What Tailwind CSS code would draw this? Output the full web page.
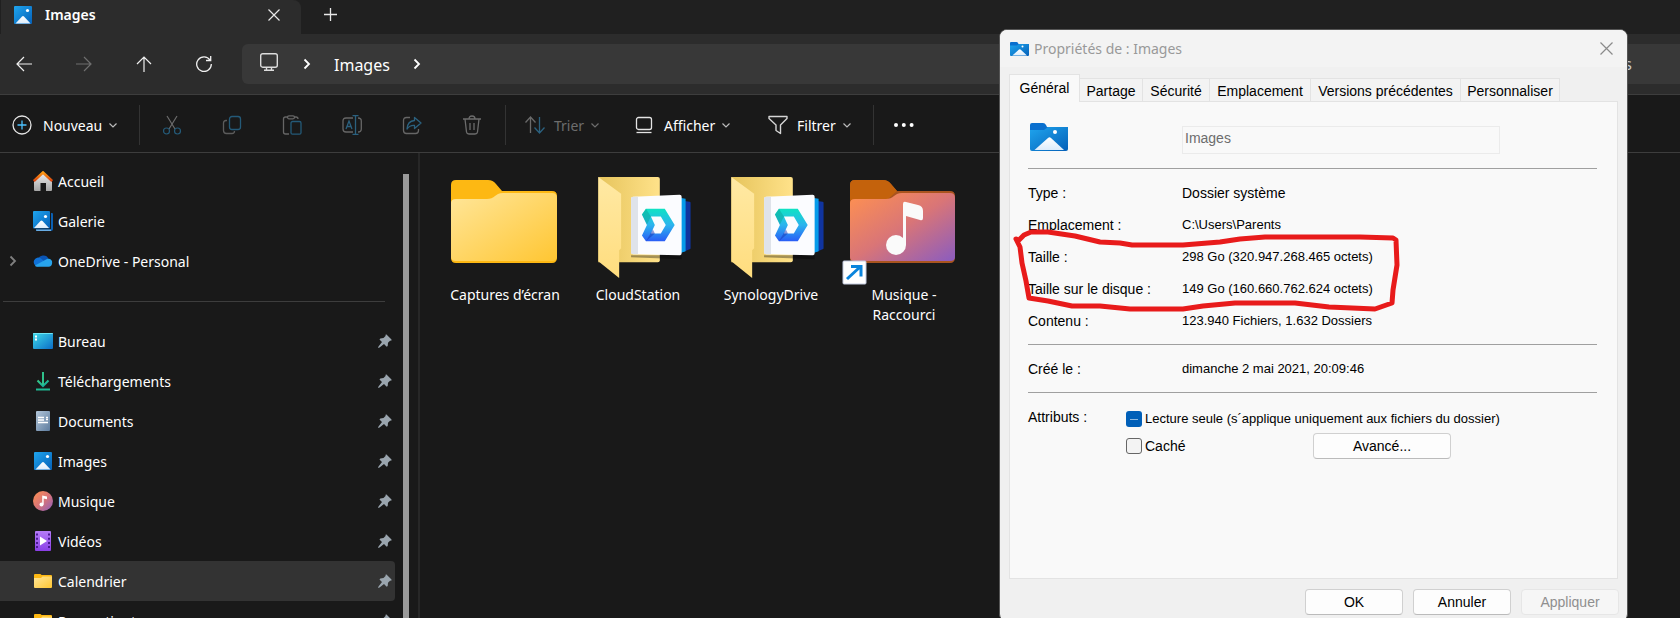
<!DOCTYPE html>
<html lang="fr">
<head>
    <meta charset="UTF-8" />
    <meta name="viewport" content="width=device-width, initial-scale=1.0">
    <title>Images</title>
    <script src="https://cdn.jsdelivr.net/npm/@tailwindcss/browser@4"></script>
</head>
<body class="relative h-screen overflow-hidden bg-[#191919] text-white text-[14px] font-['Noto_Sans',sans-serif]">

    <svg class="absolute size-0" xmlns="http://www.w3.org/2000/svg">
        <defs>
            <linearGradient id="blue" x1="0" y1="0" x2="1" y2="1"><stop offset="0" stop-color="#1fa5ee"/><stop offset="1" stop-color="#0560b8"/></linearGradient>
            <linearGradient id="snow" x1="0" y1="0" x2="0" y2="1"><stop offset="0" stop-color="#fff"/><stop offset="1" stop-color="#dcecfb"/></linearGradient>
            <linearGradient id="yellow" x1="0" y1="0" x2="1" y2="1"><stop offset="0" stop-color="#ffe69a"/><stop offset="1" stop-color="#ffc632"/></linearGradient>
            <linearGradient id="music" x1="0" y1="0" x2="1" y2="1"><stop offset="0" stop-color="#ff9150"/><stop offset=".5" stop-color="#d97577"/><stop offset="1" stop-color="#8a5cc0"/></linearGradient>
            <linearGradient id="desk" x1="0" y1="0" x2="1" y2="1"><stop offset="0" stop-color="#3fdbe9"/><stop offset="1" stop-color="#0b6cc6"/></linearGradient>
            <linearGradient id="green" x1="0" y1="0" x2="1" y2="1"><stop offset="0" stop-color="#38c987"/><stop offset="1" stop-color="#0da6a0"/></linearGradient>
            <linearGradient id="doc" x1="0" y1="0" x2="1" y2="1"><stop offset="0" stop-color="#b3c6d9"/><stop offset="1" stop-color="#5d7c9e"/></linearGradient>
            <linearGradient id="video" x1="0" y1="0" x2="0" y2="1"><stop offset="0" stop-color="#b57cf8"/><stop offset="1" stop-color="#8a3fe6"/></linearGradient>
            <linearGradient id="wall" x1="0" y1="0" x2="0" y2="1"><stop offset="0" stop-color="#f2f2f2"/><stop offset="1" stop-color="#a5a5a5"/></linearGradient>
            <linearGradient id="roof" x1="0" y1="0" x2="0" y2="1"><stop offset="0" stop-color="#ff9a12"/><stop offset="1" stop-color="#d8420e"/></linearGradient>
            <linearGradient id="back" x1="0" y1="0" x2="1" y2="0"><stop offset="0" stop-color="#e6c45c"/><stop offset="1" stop-color="#ffe28a"/></linearGradient>
            <linearGradient id="flap" x1="0" y1="0" x2="0" y2="1"><stop offset="0" stop-color="#ffe9a4"/><stop offset="1" stop-color="#ffdd7e"/></linearGradient>
            <linearGradient id="dee" x1="0" y1="0" x2="0" y2="1"><stop offset="0" stop-color="#0fe3c3"/><stop offset=".5" stop-color="#2cb4ee"/><stop offset="1" stop-color="#2a5cf6"/></linearGradient>
        </defs>
        <symbol id="i-picture" viewBox="0 0 20 20"><rect x="1" y="1" width="18" height="18" rx="1" fill="url(#blue)"/><path d="M2.500 18.500 9 11.500q1-1 2 0l6.500 7z" fill="url(#snow)"/><circle cx="14.500" cy="5.500" r="1.600" fill="#fff"/></symbol>
        <symbol id="i-picfolder" viewBox="0 0 38 28"><path d="M0 2q0-2 2-2h11q2 0 3 2l1 2h19q2 0 2 2v6H0z" fill="#0a6fce"/><path d="M0 7h14l4-3h20v22q0 2-2 2H2q-2 0-2-2z" fill="url(#blue)"/><path d="M4.500 27 18 15q1.500-1.300 3 0l13 12z" fill="url(#snow)"/><circle cx="25" cy="9" r="2" fill="#fff"/></symbol>
        <symbol id="i-chevron" viewBox="0 0 10 10"><path d="M1.500 3.500 5 7l3.500-3.500" fill="none" stroke="currentColor" stroke-width="1.200"/></symbol>
        <symbol id="i-next" viewBox="0 0 10 12"><path d="M2.500 1.500 7 6l-4.500 4.500" fill="none" stroke="currentColor" stroke-width="1.800"/></symbol>
        <symbol id="i-pin" viewBox="0 0 14 14"><path d="M8.500.5 13.500 5.500v1l-1.500.2-2 2-.3 3.300-1 .7-2.700-2.700L1.500 13.500 0 14l.5-1.500L4 8 1.500 5.500l.8-1 3.200-.4 2-2 .2-1.600z" fill="#9aa5ae"/></symbol>
        <symbol id="i-folder" viewBox="0 0 20 20"><path d="M1 4q0-1 1-1h5q1 0 1.500 1h9.500q1 0 1 1v11H1z" fill="#fdb813"/><path d="M1 7h7l1.500-1.500H19V16q0 1-1 1H2q-1 0-1-1z" fill="url(#yellow)"/></symbol>
        <symbol id="i-drive" viewBox="0 0 128 120">
            <path d="M24 11h60q2 0 2 2v82q0 2-2 2H24z" fill="url(#back)"/>
            <path d="M24 11 47 28v55l-2 2v28L24 96z" fill="url(#flap)"/>
            <path d="M109 35l7 1q1 0 1 1v46q0 1-1 1l-7 3z" fill="#10349f"/>
            <path d="M106 32l6 1v53l-6 2z" fill="#069bea"/>
            <path d="M57 90V92l51 2v-4z" fill="#000" opacity=".35"/>
            <path d="M57 33q0-2 2-2l47-2q2 0 2 2v57q0 2-2 2l-47-1q-2 0-2-2z" fill="#fbfcff"/>
            <path d="M57 33q0-2 2-2h5v58h-5q-2 0-2-2z" fill="#dfe3ea"/>
            <path d="M72 43h19l10 16.500-10 16.500H72l-4-6 5-10.500-5-10.500zm5 8 4 8.500-4 8.500h10l5-8.500-5-8.500z" fill="url(#dee)" fill-rule="evenodd"/>
            <path d="M72 43l5 8-4 8-5-10z" fill="#0aa596" opacity=".5"/><path d="M72 76l7-12 2 4z" fill="#1737b5" opacity=".5"/>
        </symbol>
    </svg>

    <div class="flex h-full flex-col">
        <!-- onglets -->
        <header class="flex h-[34px] shrink-0 bg-[#202020]">
            <div class="ml-px flex w-[300px] items-center rounded-tr-lg bg-[#2c2c2c] pl-3 pr-[21px] pb-[5px]">
                <svg class="size-5"><use href="#i-picture"/></svg>
                <span class="ml-3 flex-1 font-semibold leading-5">Images</span>
                <button aria-label="Fermer l'onglet"><svg class="size-3" viewBox="0 0 12 12" fill="none" stroke="#e8e8e8" stroke-width="1.200"><path d="M.5.5l11 11M11.500.5l-11 11"/></svg></button>
            </div>
            <button aria-label="Nouvel onglet" class="ml-[23px] self-start mt-2"><svg class="size-[13px]" viewBox="0 0 13 13" stroke="#e8e8e8" stroke-width="1.300"><path d="M6.500 0v13M0 6.500h13"/></svg></button>
        </header>

        <!-- navigation -->
        <nav class="flex h-[61px] shrink-0 items-center border-b border-[#3d3d3d] bg-[#2c2c2c] pl-4">
            <button aria-label="Précédent" class="mr-11"><svg class="size-4" viewBox="0 0 16 16" fill="none" stroke="#f0f0f0" stroke-width="1.200"><path d="M16 8H1M8 1 1 8l7 7"/></svg></button>
            <button aria-label="Suivant" class="mr-11" disabled><svg class="size-4" viewBox="0 0 16 16" fill="none" stroke="#6f6f6f" stroke-width="1.200"><path d="M0 8h15M8 1l7 7-7 7"/></svg></button>
            <button aria-label="Dossier parent" class="mr-11"><svg class="size-4" viewBox="0 0 16 16" fill="none" stroke="#f0f0f0" stroke-width="1.200"><path d="M8 16V1M1 8l7-7 7 7"/></svg></button>
            <button aria-label="Actualiser" class="mr-[30px]"><svg class="size-4" viewBox="0 0 16 16" fill="none" stroke="#f0f0f0" stroke-width="1.300"><path d="M14 4A7.300 7.300 0 1 0 15.300 8M14.700 0v4.500H10"/></svg></button>
            <div class="flex h-10 flex-1 items-center rounded-l-md bg-[#383838] pl-[18px]">
                <svg class="mb-1 size-[18px]" viewBox="0 0 18 18" fill="none" stroke="#dcdcdc" stroke-width="1.400"><rect x=".7" y=".7" width="16.600" height="13.500" rx="2"/><path d="M6.500 14.500v2.500M11.500 14.500v2.500M4 17.300h10"/></svg>
                <svg class="ml-6 h-3 w-[10px]"><use href="#i-next"/></svg>
                <a href="#" class="ml-[22px] pt-px text-[16px] leading-5">Images</a>
                <svg class="ml-[22px] h-3 w-[10px]"><use href="#i-next"/></svg>
                <input type="text" aria-label="Rechercher" placeholder="Images" class="ml-auto h-10 w-[200px] bg-transparent pr-12 text-right text-[16px] placeholder:text-[#c8c8c8] outline-none">
            </div>
        </nav>

        <!-- commandes -->
        <div class="flex h-[58px] shrink-0 items-center border-b border-[#3d3d3d] pl-3 pt-[3px]">
            <button class="flex w-[127px] items-center">
                <svg class="size-5" viewBox="0 0 20 20" fill="none"><circle cx="10" cy="10" r="9" stroke="#e4e4e4" stroke-width="1.300"/><path d="M10 5.500v9M5.500 10h9" stroke="#4cc2ff" stroke-width="1.300"/></svg>
                <span class="ml-[11px]">Nouveau</span>
                <svg class="ml-[6px] size-[10px] text-[#bbb]"><use href="#i-chevron"/></svg>
            </button>
            <div class="flex h-10 w-[367px] items-center gap-10 border-x border-[#333] pl-[22px]">
                <button aria-label="Couper" disabled><svg class="size-5" viewBox="0 0 20 20" fill="none" stroke-width="1.200"><path d="M5 1l8 13M15 1 7 14" stroke="#6c6c6c"/><circle cx="4.500" cy="16" r="3" stroke="#245a78"/><circle cx="15.500" cy="16" r="3" stroke="#245a78"/></svg></button>
                <button aria-label="Copier" disabled><svg class="size-5" viewBox="0 0 20 20" fill="none" stroke-width="1.300"><path d="M5 5.500H4q-2.500 0-2.500 2.500v7.500q0 3 3 3H10q2.500 0 2.500-2.500" stroke="#5c5c5c"/><rect x="7.500" y="1.500" width="11" height="13" rx="2.500" stroke="#245a78"/></svg></button>
                <button aria-label="Coller" disabled><svg class="size-5" viewBox="0 0 20 20" fill="none" stroke-width="1.300"><path d="M6 2H3.500Q1.500 2 1.500 4v13q0 2 2 2H7M12 2h2q2 0 2 2" stroke="#666"/><rect x="5.500" y=".8" width="7" height="3" rx="1.500" stroke="#666"/><rect x="9" y="6.500" width="10" height="12.700" rx="1.500" stroke="#245a78"/></svg></button>
                <button aria-label="Renommer" disabled><svg class="size-5" viewBox="0 0 20 20" fill="none" stroke-width="1.300"><path d="M11 3H4Q1 3 1 6v8q0 3 3 3h7M16 3q3.300 0 3.300 3v8q0 3-3.300 3" stroke="#666"/><path d="M13.500 1v18M10.500.7h6M10.500 19.300h6M4 14l3-8 3 8M5 11.500h4" stroke="#2b617f"/></svg></button>
                <button aria-label="Partager" disabled><svg class="size-5" viewBox="0 0 20 20" fill="none" stroke-width="1.300"><path d="M8 2.500H4.500q-3 0-3 3v10q0 3 3 3h9q3 0 3-3V14" stroke="#666"/><path d="M12.500 2.500 19 8l-6.500 5.500v-3Q8 10 5 14q.5-8 7.500-8.500z" stroke="#2b617f" stroke-linejoin="round"/></svg></button>
                <button aria-label="Supprimer" disabled><svg class="size-5" viewBox="0 0 20 20" fill="none" stroke="#6c6c6c" stroke-width="1.300"><path d="M1 4h18M7 4q0-3 3-3t3 3M3 4l1.500 13q.3 2 2.500 2h6q2.200 0 2.500-2L17 4M8 8v7M12 8v7"/></svg></button>
            </div>
            <div class="flex h-10 w-[368px] items-center border-r border-[#333] pl-[19px]">
                <button class="flex w-[110px] items-center text-[#6d6d6d]" disabled>
                    <svg class="size-5" viewBox="0 0 20 20" fill="none" stroke-width="1.300"><path d="M5.500 18V2.500M.5 7.500l5-5.500 5 5.500" stroke="#6a6a6a"/><path d="M14.500 2v15.500M9.500 12.500l5 5.500 5-5.500" stroke="#2b617f"/></svg>
                    <span class="ml-[9px]">Trier</span>
                    <svg class="ml-[6px] size-[10px]"><use href="#i-chevron"/></svg>
                </button>
                <button class="flex w-[133px] items-center">
                    <svg class="size-[18px]" viewBox="0 0 18 18" fill="none" stroke="#e4e4e4" stroke-width="1.300"><rect x="1.500" y="1.500" width="15" height="12" rx="2"/><path d="M1.500 16.500h15"/></svg>
                    <span class="ml-[11px]">Afficher</span>
                    <svg class="ml-[6px] size-[10px] text-[#bbb]"><use href="#i-chevron"/></svg>
                </button>
                <button class="flex items-center">
                    <svg class="size-5" viewBox="0 0 20 20" fill="none" stroke="#d5d5d5" stroke-width="1.400" stroke-linejoin="round"><path d="M1 1.500h18v2L12.500 10v8.500l-4.500-3V10L1 3.500z"/></svg>
                    <span class="ml-[9px]">Filtrer</span>
                    <svg class="ml-[6px] size-[10px] text-[#bbb]"><use href="#i-chevron"/></svg>
                </button>
            </div>
            <button aria-label="Plus d'options" class="ml-5"><svg class="size-5" viewBox="0 0 20 20" fill="#fff"><circle cx="2" cy="10" r="2"/><circle cx="9.800" cy="10" r="2"/><circle cx="17.600" cy="10" r="2"/></svg></button>
        </div>

        <div class="flex min-h-0 flex-1">
            <!-- volet de navigation -->
            <aside class="flex w-[420px] shrink-0 overflow-hidden border-r-2 border-[#272727]">
                <ul class="w-[395px] shrink-0 pt-2">
                    <li class="flex h-10 items-center pl-[33px]">
                        <svg class="mr-[5px] size-5" viewBox="0 0 20 20"><path d="M1 9l9-8 9 8v10q0 1-1 1h-5v-8H7.500v8H2q-1 0-1-1z" fill="url(#wall)"/><path d="M.8 10 10 1.500l9.200 8.500" fill="none" stroke="url(#roof)" stroke-width="2.600"/></svg>
                        <a href="#">Accueil</a>
                    </li>
                    <li class="flex h-10 items-center pl-[33px]">
                        <svg class="mr-[5px] size-5" viewBox="0 0 20 20"><path d="M18 2h1q1 0 1 1v15q0 2-2 2H4q-1 0-1-1v-.5h15z" fill="#0a5fb2"/><path d="M3 18.500h15V20H4q-1 0-1-1z" fill="#68ace3"/><rect width="17" height="17.500" rx="1" fill="url(#blue)"/><path d="M1 17l6.500-7q1-1 2 0l6.500 7z" fill="url(#snow)"/><circle cx="12.500" cy="5.500" r="1.600" fill="#fff"/></svg>
                        <a href="#">Galerie</a>
                    </li>
                    <li class="flex h-10 items-center pl-2">
                        <svg class="mr-[15px] h-3 w-[10px] text-[#808080]"><use href="#i-next"/></svg>
                        <svg class="mr-[5px] size-5" viewBox="0 0 20 20"><path d="M5 9a5.500 5.500 0 0 1 10.500-1l-3 6z" fill="#0a55b5"/><path d="M4.500 15.500A4.500 4.500 0 1 1 8 7.500l7 6z" fill="#1071d6"/><path d="M2 14.500 13 8.500q1.500-1.200 3-.7a4 4 0 0 1-.5 7.900H4q-1.500 0-2-1.200z" fill="#28a4ec"/></svg>
                        <a href="#">OneDrive - Personal</a>
                    </li>
                    <li class="ml-[3px] mr-[10px] flex h-10 items-center"><hr class="w-full border-[#3d3d3d]"></li>
                    <li class="flex h-10 items-center pl-[33px] pr-[3px]">
                        <svg class="mr-[5px] size-5" viewBox="0 0 20 20"><rect y="2" width="20" height="16" rx="1" fill="url(#desk)"/><path d="M2 4.500h2v2H2zM2 7.500h2v2H2z" fill="#fff"/><path d="M0 3q0-1 1-1h18q1 0 1 1z" fill="#6fe6f5"/></svg>
                        <a href="#" class="flex-1">Bureau</a><svg class="size-[14px]"><use href="#i-pin"/></svg>
                    </li>
                    <li class="flex h-10 items-center pl-[33px] pr-[3px]">
                        <svg class="mr-[5px] size-5" viewBox="0 0 20 20" fill="none" stroke="url(#green)" stroke-width="2"><path d="M4.500 9.500 10 15l5.500-5.500"/><path d="M3 18.500h14" stroke="#1fb893"/><path d="M10 1v13" stroke="#2fc18b"/></svg>
                        <a href="#" class="flex-1">Téléchargements</a><svg class="size-[14px]"><use href="#i-pin"/></svg>
                    </li>
                    <li class="flex h-10 items-center pl-[33px] pr-[3px]">
                        <svg class="mr-[5px] size-5" viewBox="0 0 20 20"><rect x="3" width="14" height="20" rx="1" fill="url(#doc)"/><path d="M5 6.500h6M5 9h6M5 11.500h10M13 6.500h2M13 8.500h2" stroke="#fff" stroke-width="1.400"/></svg>
                        <a href="#" class="flex-1">Documents</a><svg class="size-[14px]"><use href="#i-pin"/></svg>
                    </li>
                    <li class="flex h-10 items-center pl-[33px] pr-[3px]">
                        <svg class="mr-[5px] size-5"><use href="#i-picture"/></svg>
                        <a href="#" class="flex-1">Images</a><svg class="size-[14px]"><use href="#i-pin"/></svg>
                    </li>
                    <li class="flex h-10 items-center pl-[33px] pr-[3px]">
                        <svg class="mr-[5px] size-5" viewBox="0 0 20 20"><circle cx="10" cy="10" r="10" fill="url(#music)"/><circle cx="8.500" cy="13.500" r="2" fill="#fff"/><path d="M9.200 4.500 14 5.500v2.700l-3.300-.8v6H9.200z" fill="#fff"/></svg>
                        <a href="#" class="flex-1">Musique</a><svg class="size-[14px]"><use href="#i-pin"/></svg>
                    </li>
                    <li class="flex h-10 items-center pl-[33px] pr-[3px]">
                        <svg class="mr-[5px] size-5" viewBox="0 0 20 20"><rect x="2" width="16" height="20" rx="1" fill="url(#video)"/><path d="M4 2.500v16M16 2.500v16" stroke="#4b1a92" stroke-width="2" stroke-dasharray="2 2.200"/><path d="M7 5.500v9l7-4.500z" fill="#fff"/></svg>
                        <a href="#" class="flex-1">Vidéos</a><svg class="size-[14px]"><use href="#i-pin"/></svg>
                    </li>
                    <li class="flex h-10 items-center rounded-r-sm bg-[#333] pl-[33px] pr-[3px]">
                        <svg class="mr-[5px] size-5"><use href="#i-folder"/></svg>
                        <a href="#" class="flex-1">Calendrier</a><svg class="size-[14px]"><use href="#i-pin"/></svg>
                    </li>
                    <li class="flex h-10 items-center pl-[33px] pr-[3px]">
                        <svg class="mr-[5px] size-5"><use href="#i-folder"/></svg>
                        <a href="#" class="flex-1">Reconstinut</a><svg class="size-[14px]"><use href="#i-pin"/></svg>
                    </li>
                </ul>
                <div class="ml-2 mt-[21px] w-[6px] bg-[#9a9a9a]"></div>
            </aside>

            <!-- fichiers -->
            <main class="flex flex-1 gap-[5px] pl-[21px] pt-[13px] text-center leading-5">
                <figure class="w-32">
                    <svg class="h-[119px] w-32" viewBox="0 0 128 119">
                        <path d="M10 19q0-5 5-5h32q5 0 8 4l6 7h50q5 0 5 5v61q0 6-5 6H15q-5 0-5-5z" fill="#fdb813"/>
                        <path d="M10 37q0-4 5-4h31q5 0 8-3l3-2q2-1 5-1h49q5 0 5 5v59q0 4-5 4H15q-5 0-5-4z" fill="url(#yellow)"/>
                    </svg>
                    <figcaption>Captures d’écran</figcaption>
                </figure>
                <figure class="w-32">
                    <svg class="h-[119px] w-32"><use href="#i-drive"/></svg>
                    <figcaption>CloudStation</figcaption>
                </figure>
                <figure class="w-32">
                    <svg class="h-[119px] w-32"><use href="#i-drive"/></svg>
                    <figcaption>SynologyDrive</figcaption>
                </figure>
                <figure class="w-32">
                    <svg class="h-[119px] w-32" viewBox="0 0 128 119">
                        <path d="M10 19q0-5 5-5h28q5 0 8 4l6 7h53q5 0 5 5v61q0 6-5 6H15q-5 0-5-5z" fill="#a9541f"/>
                        <path d="M10 19q0-5 5-5h28q5 0 8 4l6 7-10 9H10z" fill="#c4620c"/>
                        <path d="M10 37q0-4 5-4h31q5 0 8-3l3-2q2-1 5-1h48q5 0 5 5v59q0 4-5 4H15q-5 0-5-4z" fill="url(#music)"/>
                        <circle cx="56" cy="79" r="10" fill="#fafafa"/><path d="M63 38q0-3 3-2l12 3q5 1 5 6v7q0 3-3 2l-14-4v29h-3z" fill="#fafafa"/>
                        <rect x="3" y="95" width="23" height="23" rx="1" fill="#fff" stroke="#c3cbe0"/><path d="M7 113 20 101M11 100.500h10v10" fill="none" stroke="#0a84dc" stroke-width="3"/>
                    </svg>
                    <figcaption>Musique -<br>Raccourci</figcaption>
                </figure>
            </main>
        </div>
    </div>

    <!-- boîte de dialogue des propriétés -->
    <div role="dialog" aria-labelledby="dlgTitle" class="absolute right-[52px] top-[29px] w-[629px] overflow-hidden rounded-lg border border-[#555] bg-[#f0f0f0] text-black text-[14px] leading-4 font-['Liberation_Sans',sans-serif]">
        <div class="flex h-[37px] items-center bg-[#f3f3f3] pl-[10px] pr-[14px]">
            <svg class="h-[14px] w-[19px]"><use href="#i-picfolder"/></svg>
            <h2 id="dlgTitle" class="ml-[5px] flex-1 text-[#999] font-['Noto_Sans',sans-serif]">Propriétés de : Images</h2>
            <button aria-label="Fermer"><svg class="size-[13px]" viewBox="0 0 13 13" stroke="#8a8a8a" stroke-width="1.200"><path d="M.5.5l12 12M12.500.5l-12 12"/></svg></button>
        </div>
        <div class="px-[9px] pt-[7px]">
            <div role="tablist" class="relative -mb-px flex items-end">
                <button role="tab" aria-selected="true" class="h-7 w-[71px] border border-b-0 border-[#e3e3e3] bg-[#f9f9f9] pb-px">Général</button>
                <button role="tab" class="h-6 w-[63px] border border-l-0 border-[#e3e3e3] bg-[#f3f3f3] pt-px">Partage</button>
                <button role="tab" class="h-6 w-[67px] border border-l-0 border-[#e3e3e3] bg-[#f3f3f3] pt-px">Sécurité</button>
                <button role="tab" class="h-6 w-[101px] border border-l-0 border-[#e3e3e3] bg-[#f3f3f3] pt-px">Emplacement</button>
                <button role="tab" class="h-6 w-[150px] border border-l-0 border-[#e3e3e3] bg-[#f3f3f3] pt-px">Versions précédentes</button>
                <button role="tab" class="h-6 w-[99px] border border-l-0 border-[#e3e3e3] bg-[#f3f3f3] pt-px">Personnaliser</button>
            </div>
            <div role="tabpanel" class="h-[478px] border border-[#e3e3e3] bg-[#f9f9f9] pl-[18px] pr-5 pt-5">
                <div class="flex h-[46px] items-start">
                    <div class="w-[154px] pl-[2px] pt-px"><svg class="h-[28px] w-[38px]"><use href="#i-picfolder"/></svg></div>
                    <input type="text" value="Images" aria-label="Nom" disabled class="mt-1 h-7 w-[318px] border border-[#ebebeb] px-[2px] pb-[5px] text-[#6d6d6d]">
                </div>
                <hr class="border-[#a0a0a0]">
                <dl class="grid grid-cols-[154px_1fr] gap-y-4 pb-[15px] pt-4">
                    <dt>Type :</dt><dd>Dossier système</dd>
                    <dt>Emplacement :</dt><dd class="text-[13px]">C:\Users\Parents</dd>
                    <dt>Taille :</dt><dd class="text-[13px]">298 Go (320.947.268.465 octets)</dd>
                    <dt>Taille sur le disque :</dt><dd class="text-[13px]">149 Go (160.660.762.624 octets)</dd>
                    <dt>Contenu :</dt><dd class="text-[13px]">123.940 Fichiers, 1.632 Dossiers</dd>
                </dl>
                <hr class="border-[#a0a0a0]">
                <dl class="grid grid-cols-[154px_1fr] pb-[15px] pt-4">
                    <dt>Créé le :</dt><dd class="text-[13px]">dimanche 2 mai 2021, 20:09:46</dd>
                </dl>
                <hr class="border-[#a0a0a0]">
                <div class="flex pt-4">
                    <span class="w-[98px]">Attributs :</span>
                    <div class="flex-1">
                        <label class="flex h-5 items-center gap-[3px] text-[13px]">
                            <input type="checkbox" checked class="size-4 appearance-none rounded-[3px] bg-[#005fb8] bg-[linear-gradient(#8fb9e0,#8fb9e0)] bg-[length:8px_1px] bg-center bg-no-repeat">
                            Lecture seule (s´applique uniquement aux fichiers du dossier)
                        </label>
                        <div class="mt-1 flex h-[26px] items-center">
                            <label class="flex w-[187px] items-center gap-[3px]">
                                <input type="checkbox" class="size-4 appearance-none rounded-[3px] border border-[#666] bg-[#f3f3f3]">
                                Caché
                            </label>
                            <button class="h-[26px] w-[138px] rounded border border-[#d0d0d0] border-b-[#bbb] bg-[#fdfdfd]">Avancé...</button>
                        </div>
                    </div>
                </div>
            </div>
            <div class="-mr-px flex justify-end gap-[10px] pb-[6px] pt-[10px]">
                <button class="h-[26px] w-[98px] rounded border border-[#d0d0d0] border-b-[#bbb] bg-[#fdfdfd]">OK</button>
                <button class="h-[26px] w-[98px] rounded border border-[#d0d0d0] border-b-[#bbb] bg-[#fdfdfd]">Annuler</button>
                <button disabled class="h-[26px] w-[98px] rounded border border-[#e6e6e6] bg-[#f6f6f6] text-[#8f8f8f]">Appliquer</button>
            </div>
        </div>
    </div>

    <!-- annotation au feutre rouge -->
    <svg class="pointer-events-none absolute right-[266px] top-[224px] h-[96px] w-[404px]" viewBox="1010 224 404 96" fill="none" stroke="#e81b1b" stroke-width="5" stroke-linejoin="round" stroke-linecap="round">
        <path d="M1016 239 1020 247 1022 263 1026 281 1029 298 1048 301 1072 306 1100 306 1130 309 1183 309 1203 306 1235 303H1295L1329 307 1375 309 1392 303 1393 290 1397 265 1396 240 1393 238 1360 237H1265L1240 239 1220 242 1183 245H1132L1120 243 1100 242 1075 236 1048 232H1031L1024 235 1018 241"/>
    </svg>

</body>
</html>
